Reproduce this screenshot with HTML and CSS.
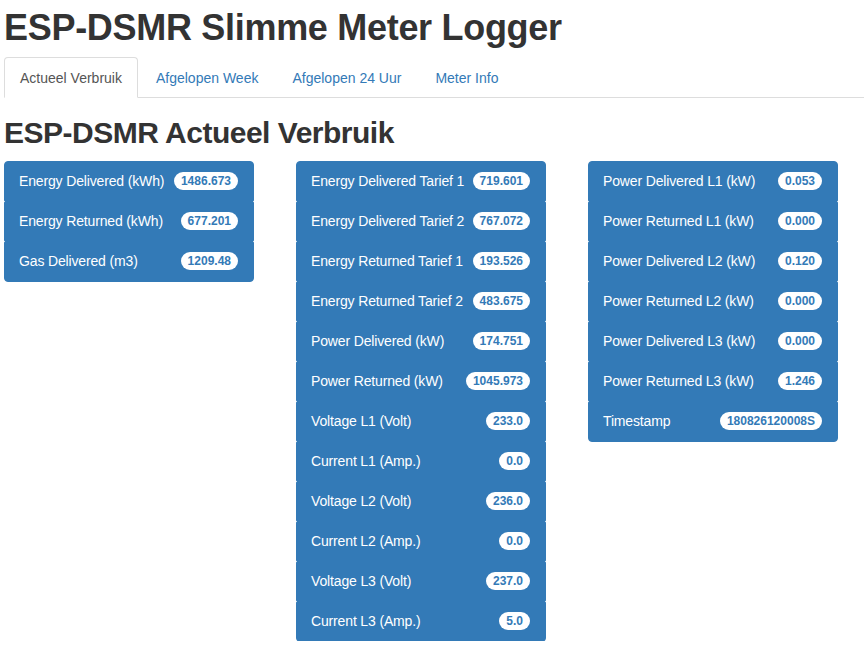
FILE: index.html
```html
<!DOCTYPE html>
<html>
<head>
<meta charset="utf-8">
<title>ESP-DSMR Slimme Meter Logger</title>
<link rel="stylesheet" href="styles.css">
</head>
<body>
<div class="page">
  <h1 class="title">ESP-DSMR Slimme Meter Logger</h1>
  <ul class="tabs">
    <li class="tab active"><a>Actueel Verbruik</a></li>
    <li class="tab"><a>Afgelopen Week</a></li>
    <li class="tab"><a>Afgelopen 24 Uur</a></li>
    <li class="tab"><a>Meter Info</a></li>
  </ul>
  <h2 class="subtitle">ESP-DSMR Actueel Verbruik</h2>
  <div class="columns">
    <ul class="list">
      <li class="item">Energy Delivered (kWh)<span class="badge">1486.673</span></li>
      <li class="item">Energy Returned (kWh)<span class="badge">677.201</span></li>
      <li class="item">Gas Delivered (m3)<span class="badge">1209.48</span></li>
    </ul>
    <ul class="list">
      <li class="item">Energy Delivered Tarief 1<span class="badge">719.601</span></li>
      <li class="item">Energy Delivered Tarief 2<span class="badge">767.072</span></li>
      <li class="item">Energy Returned Tarief 1<span class="badge">193.526</span></li>
      <li class="item">Energy Returned Tarief 2<span class="badge">483.675</span></li>
      <li class="item">Power Delivered (kW)<span class="badge">174.751</span></li>
      <li class="item">Power Returned (kW)<span class="badge">1045.973</span></li>
      <li class="item">Voltage L1 (Volt)<span class="badge">233.0</span></li>
      <li class="item">Current L1 (Amp.)<span class="badge">0.0</span></li>
      <li class="item">Voltage L2 (Volt)<span class="badge">236.0</span></li>
      <li class="item">Current L2 (Amp.)<span class="badge">0.0</span></li>
      <li class="item">Voltage L3 (Volt)<span class="badge">237.0</span></li>
      <li class="item">Current L3 (Amp.)<span class="badge">5.0</span></li>
    </ul>
    <ul class="list">
      <li class="item">Power Delivered L1 (kW)<span class="badge">0.053</span></li>
      <li class="item">Power Returned L1 (kW)<span class="badge">0.000</span></li>
      <li class="item">Power Delivered L2 (kW)<span class="badge">0.120</span></li>
      <li class="item">Power Returned L2 (kW)<span class="badge">0.000</span></li>
      <li class="item">Power Delivered L3 (kW)<span class="badge">0.000</span></li>
      <li class="item">Power Returned L3 (kW)<span class="badge">1.246</span></li>
      <li class="item">Timestamp<span class="badge">180826120008S</span></li>
    </ul>
  </div>
</div>
</body>
</html>
```

FILE: styles.css
```css
html, body {
  margin: 0;
  padding: 0;
  background: #fff;
}

body {
  font-family: "Liberation Sans", Arial, sans-serif;
  font-size: 14px;
  line-height: 20px;
  color: #333;
}

.page {
  padding: 8px 0 0 4px;
}

.title {
  margin: 0 0 10px 0;
  font-size: 36px;
  line-height: 39px;
  font-weight: 700;
  letter-spacing: -0.3px;
  color: #333;
}

.tabs {
  list-style: none;
  margin: 0;
  padding: 0;
  display: flex;
  border-bottom: 1px solid #ddd;
}

.tab {
  margin: 0 2px -1px 0;
}

.tab a {
  display: block;
  padding: 10px 15px 9px;
  line-height: 20px;
  border: 1px solid transparent;
  border-radius: 4px 4px 0 0;
  color: #337ab7;
}

.tab.active a {
  color: #555;
  background: #fff;
  border-color: #ddd;
  border-bottom-color: transparent;
}

.subtitle {
  margin: 18px 0 12px 0;
  font-size: 30px;
  line-height: 33px;
  font-weight: 700;
  letter-spacing: -0.5px;
  color: #333;
}

.columns {
  display: grid;
  grid-template-columns: 250px 250px 250px;
  column-gap: 42px;
  align-items: start;
}

.list {
  list-style: none;
  margin: 0;
  padding: 0;
}

.item {
  display: flex;
  justify-content: space-between;
  align-items: flex-start;
  padding: 9px 15px 10px 14px;
  margin-bottom: -1px;
  line-height: 20px;
  letter-spacing: -0.15px;
  background: #337ab7;
  border: 1px solid #337ab7;
  border-radius: 2px;
  color: #fff;
}

.item:first-child {
  border-top-left-radius: 4px;
  border-top-right-radius: 4px;
}

.item:last-child {
  border-bottom-left-radius: 4px;
  border-bottom-right-radius: 4px;
}

.badge {
  display: inline-block;
  margin-top: 1px;
  padding: 3px 7px;
  font-size: 12px;
  font-weight: 700;
  line-height: 12px;
  letter-spacing: 0;
  background: #fff;
  color: #337ab7;
  border-radius: 10px;
  white-space: nowrap;
}
```
